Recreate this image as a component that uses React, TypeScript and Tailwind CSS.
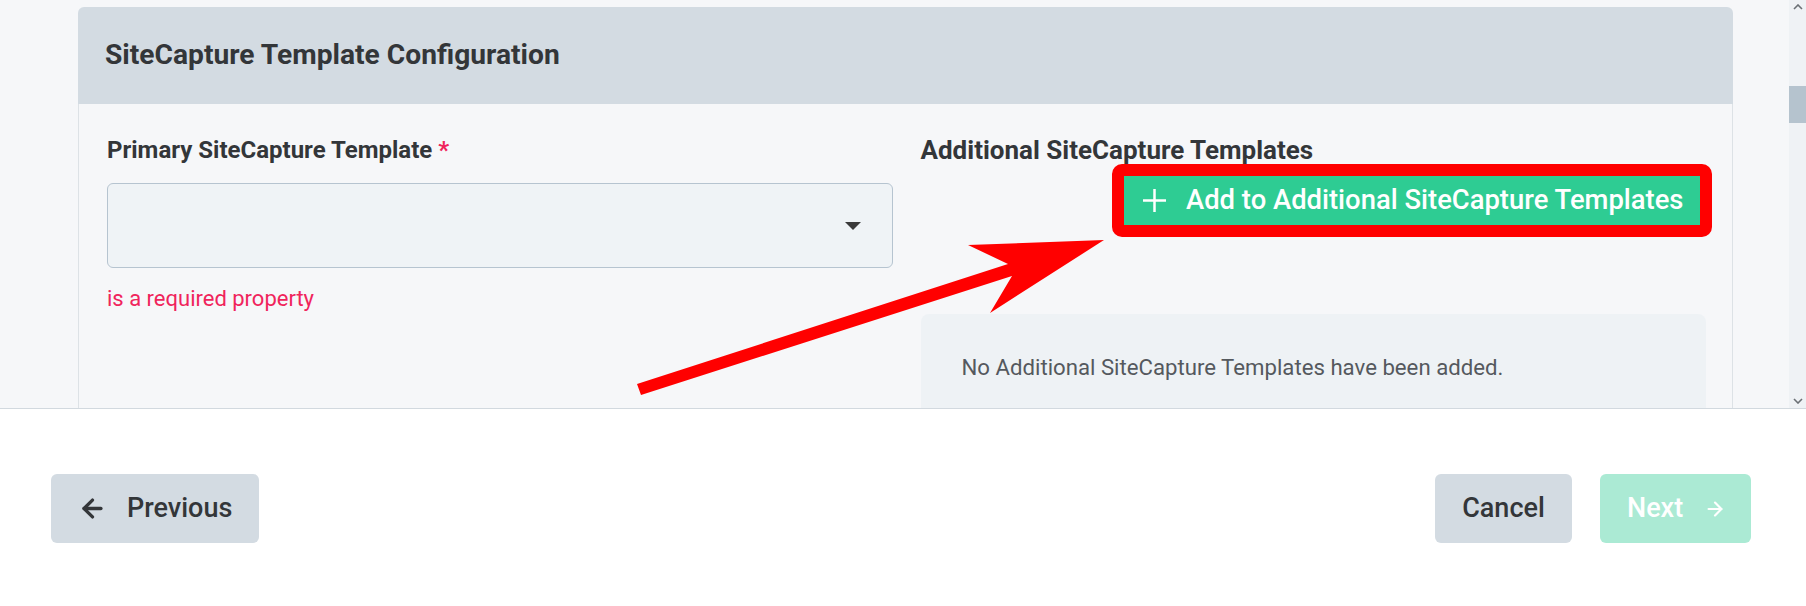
import { ArrowLeft, ArrowRight } from 'lucide-react';

function Chevron({ up }: { up?: boolean }) {
    return (
        <svg width="10" height="6" viewBox="0 0 10 6" className="text-[#6b7075]">
            <polyline
                points={up ? "1,5 5,1 9,5" : "1,1 5,5 9,1"}
                fill="none"
                stroke="currentColor"
                strokeWidth="1.6"
            />
        </svg>
    );
}

function ScrollBar() {
    return (
        <div className="w-[17px] shrink-0 bg-[#eff2f5] flex flex-col items-center">
            <div className="h-[14px] flex items-center justify-center"><Chevron up /></div>
            <div className="mt-[72px] h-[37px] w-full bg-[#b5c3ce]" />
            <div className="flex-1" />
            <div className="h-[14px] flex items-center justify-center"><Chevron /></div>
        </div>
    );
}

function PlusIcon() {
    return (
        <svg width="23" height="23" viewBox="0 0 23 23" className="shrink-0">
            <path d="M11.5 0 V23 M0 11.5 H23" stroke="#ffffff" strokeWidth="2.5" />
        </svg>
    );
}

// hand-drawn callout arrow that sits over the form
function CalloutArrow() {
    return (
        <svg
            className="absolute inset-0 pointer-events-none"
            width="1806"
            height="606"
            viewBox="0 0 1806 606"
        >
            <polygon
                points="1104,240 968,245 1008,264 637,384 641,395 1012,276 990,313"
                fill="#ff0000"
            />
        </svg>
    );
}

function TemplateCard() {
    return (
        <div className="ml-[78px] mt-[7px] w-[1655px]">
            <div className="h-[97px] rounded-t-[6px] bg-[#d3dbe2] flex items-center px-[27px]">
                <h2 className="text-[28.2px] font-bold text-[#333639]">SiteCapture Template Configuration</h2>
            </div>
            <div className="border-x border-[#dde2e6] bg-[#f6f7f9] pl-[28px] pr-[26px] pt-[32px] pb-[80px] grid grid-cols-2 gap-x-[28px]">
                <div className="flex flex-col">
                    <label className="text-[24px] leading-[28px] font-bold text-[#333639]">
                        Primary SiteCapture Template <span className="text-[#f0245c]">*</span>
                    </label>
                    <div className="mt-[19px] h-[85px] rounded-[6px] border border-[#b6c4d0] bg-[#eff3f6] flex items-center justify-end pr-[31px]">
                        <div className="w-0 h-0 border-l-[8.5px] border-r-[8.5px] border-t-[8px] border-l-transparent border-r-transparent border-t-[#3a3a3a]" />
                    </div>
                    <p className="mt-[18px] text-[22px] leading-[26px] text-[#f0245c]">is a required property</p>
                </div>
                <div className="flex flex-col">
                    <label className="text-[26px] leading-[28px] font-bold text-[#333639]">
                        Additional SiteCapture Templates
                    </label>
                    <div className="relative self-end mr-[6px] mt-[12px]">
                        <button className="h-[49px] w-[576px] bg-[#2ecc93] text-white text-[27.4px] font-medium flex items-center gap-[20px] pl-[19px]">
                            <PlusIcon />
                            <span>Add to Additional SiteCapture Templates</span>
                        </button>
                        <div className="absolute -inset-[12px] rounded-[10px] border-[12px] border-[#ff0000] pointer-events-none" />
                    </div>
                    <div className="mt-[89px] rounded-[8px] bg-[#eef2f5] pl-[41px] pt-[40px] pb-[60px]">
                        <p className="text-[22.2px] leading-[26px] text-[#55595e]">
                            No Additional SiteCapture Templates have been added.
                        </p>
                    </div>
                </div>
            </div>
        </div>
    );
}

function Footer() {
    return (
        <div className="flex-1 border-t border-[#d2d9df] bg-white flex items-center justify-between pl-[51px] pr-[55px] pt-[2px]">
            <button className="h-[69px] w-[208px] rounded-[6px] bg-[#d3dbe2] text-[#333639] text-[27px] font-medium flex items-center pl-[27px] gap-[20px]">
                <ArrowLeft size={29} strokeWidth={2.7} />
                <span>Previous</span>
            </button>
            <div className="flex items-center gap-[28px]">
                <button className="h-[69px] w-[137px] rounded-[6px] bg-[#d3dbe2] text-[#333639] text-[27px] font-medium flex items-center justify-center">
                    Cancel
                </button>
                <button disabled className="h-[69px] w-[151px] rounded-[6px] bg-[#abead4] text-white text-[27px] font-medium flex items-center pl-[27px] gap-[21px]">
                    <span>Next</span>
                    <ArrowRight size={22} strokeWidth={2.4} />
                </button>
            </div>
        </div>
    );
}

export default function App() {
    return (
        <div className="relative w-[1806px] h-[606px] overflow-hidden bg-white flex flex-col font-[Roboto,sans-serif]">
            <div className="h-[408px] shrink-0 flex bg-[#f6f7f9]">
                <div className="flex-1 overflow-hidden">
                    <TemplateCard />
                </div>
                <ScrollBar />
            </div>
            <Footer />
            <CalloutArrow />
        </div>
    );
}
